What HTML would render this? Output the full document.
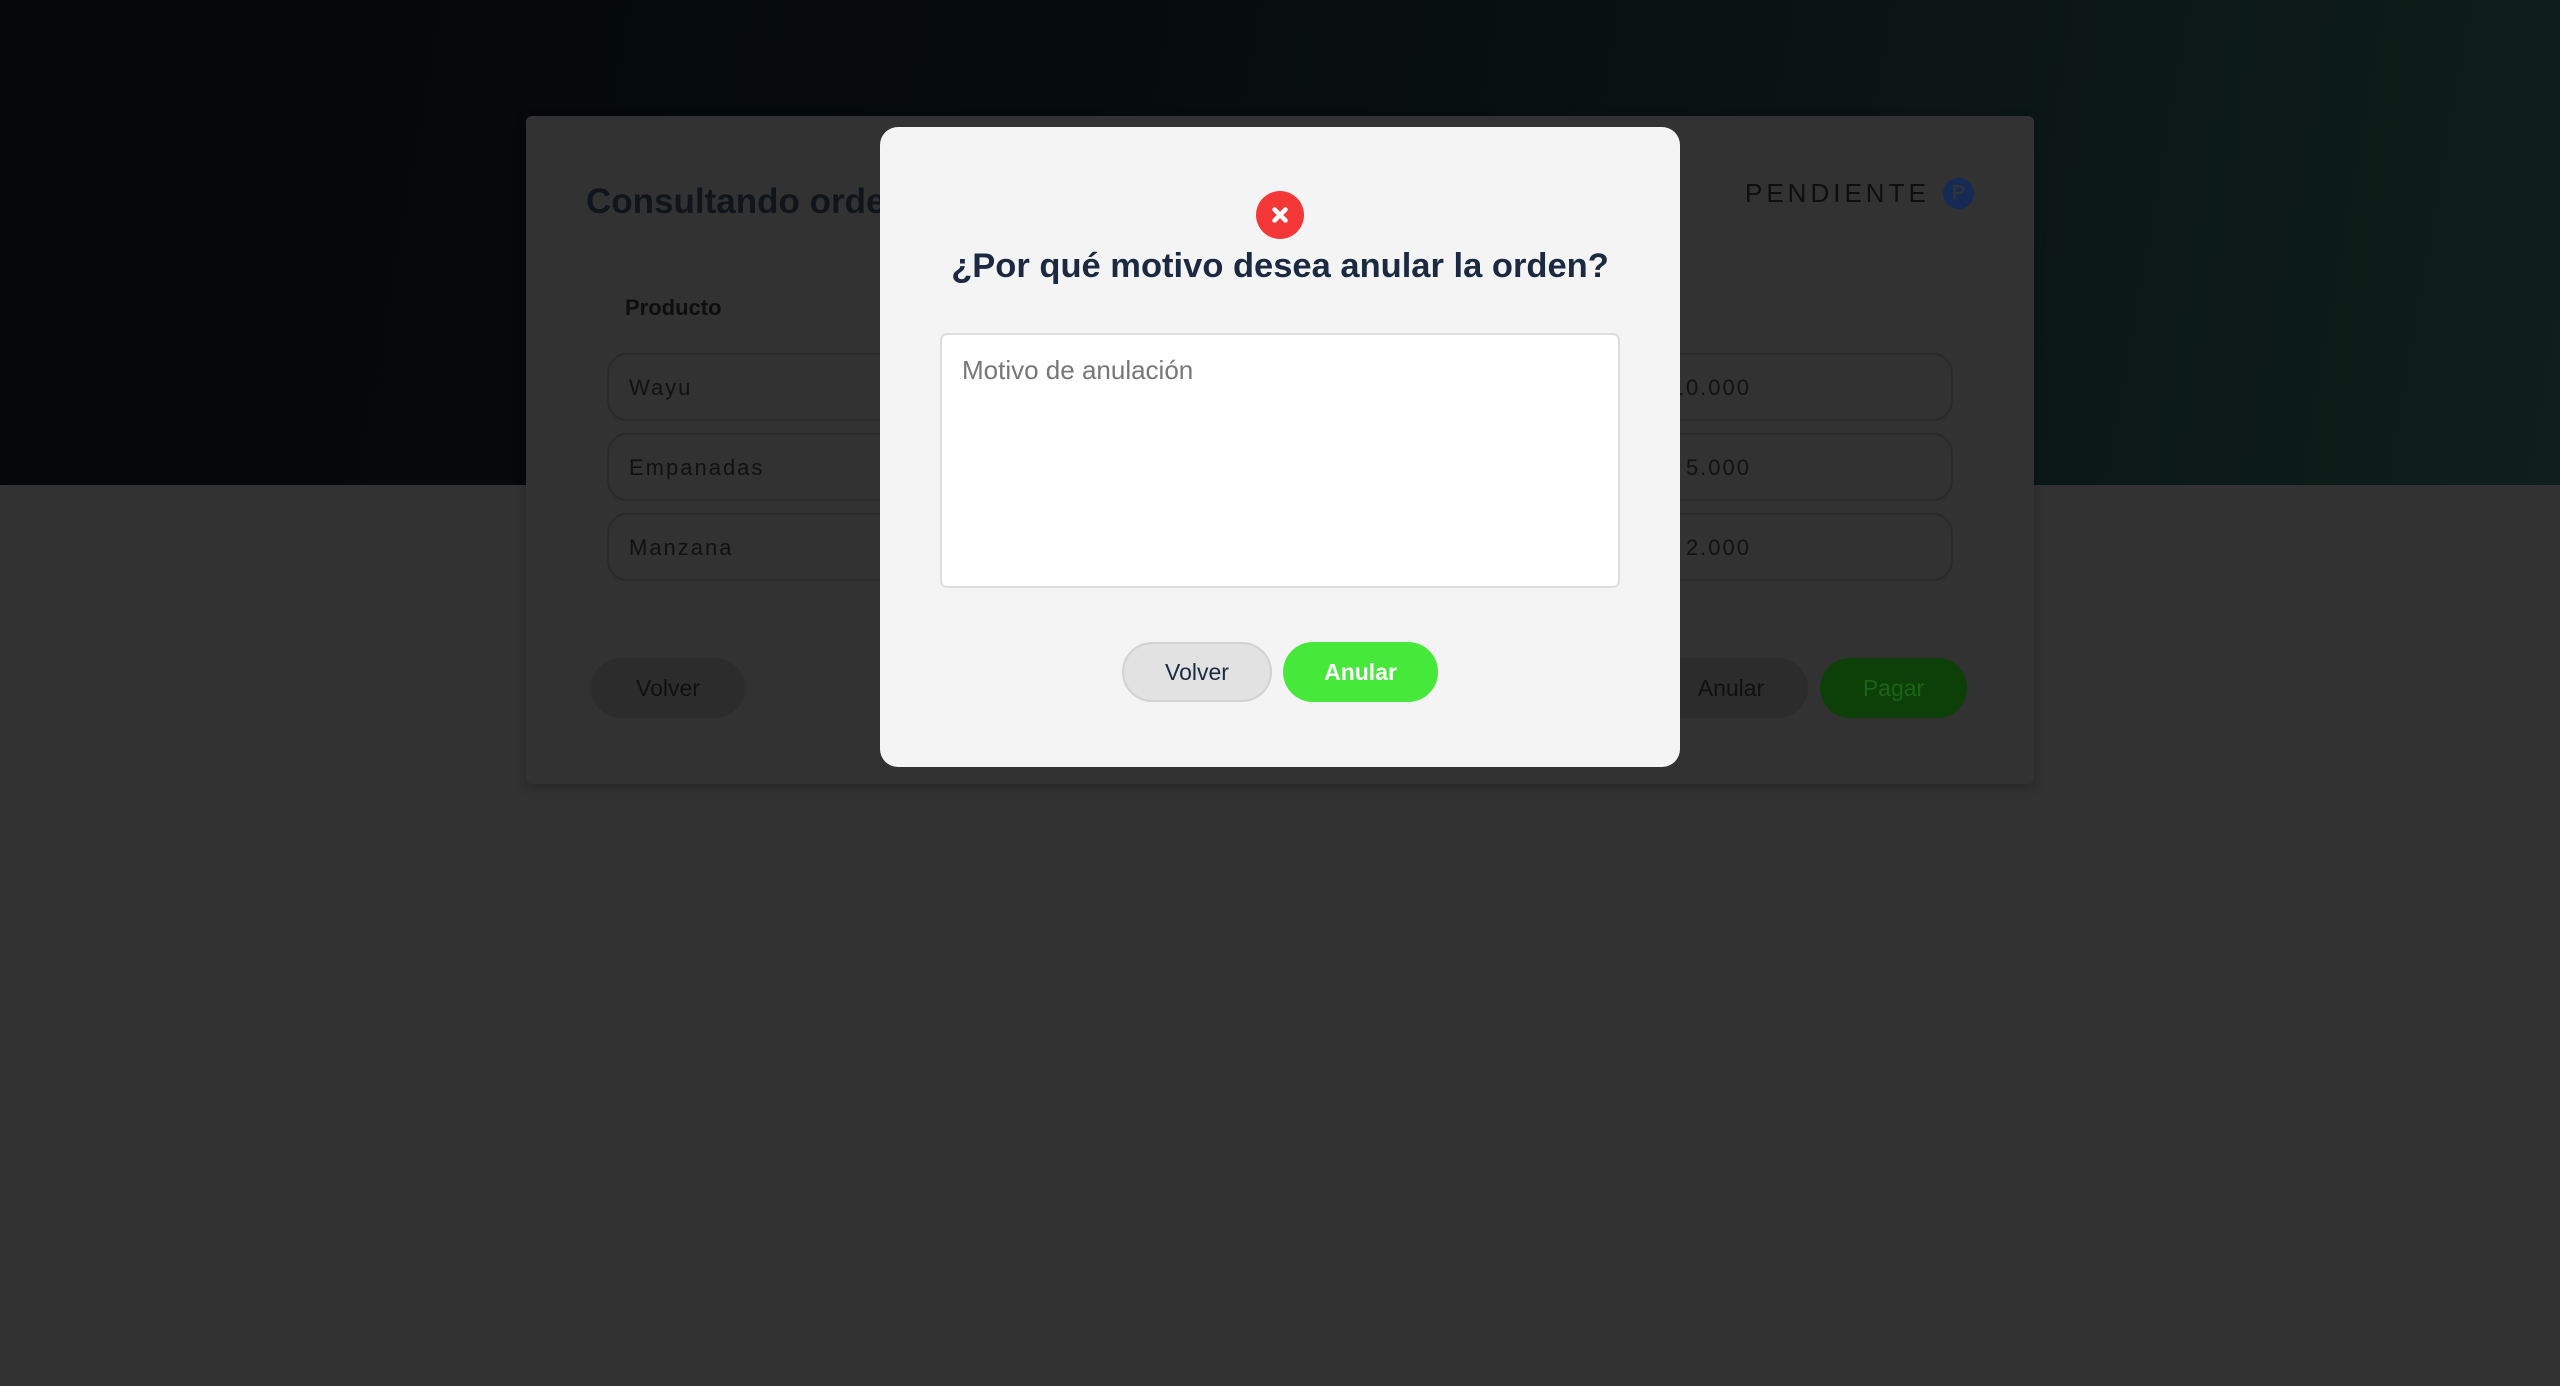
<!DOCTYPE html>
<html><head><meta charset="utf-8"><style>
*{box-sizing:border-box;margin:0;padding:0}
body{width:2560px;height:1386px;overflow:hidden;background:#323232;font-family:"Liberation Sans",Roboto,sans-serif;position:relative}
.hdr{position:absolute;left:0;top:0;width:2560px;height:485px;background:linear-gradient(100deg,#040707 0%,#060b0b 40%,#0a1413 70%,#0f1f1b 100%)}
.card{position:absolute;left:526px;top:116px;width:1508px;height:668px;background:#323232;border-radius:6px;box-shadow:0 4px 12px rgba(0,0,0,.25)}
.a{position:absolute}
.row{position:absolute;left:81px;width:1346px;height:68px;border:2px solid #2a2a2a;border-radius:20px}
.row span{position:absolute;left:20px;top:20px;font-size:22px;letter-spacing:2px;color:#111}
.row b{position:absolute;right:200px;top:20px;font-weight:normal;font-size:22px;letter-spacing:2px;color:#111}
.btn{position:absolute;height:60px;border-radius:30px;display:flex;align-items:center;justify-content:center;font-size:23px}
.modal{position:absolute;left:880px;top:127px;width:800px;height:640px;background:#f4f4f4;border-radius:18px}
</style></head><body>
<div class="hdr"></div>
<div class="card">
 <div class="a" style="left:60px;top:66px;font-size:35px;font-weight:bold;color:#10151c">Consultando orden</div>
 <div class="a" style="left:1219px;top:62px;font-size:26px;letter-spacing:4px;color:#0e0e0e">PENDIENTE</div>
 <div class="a" style="left:1417px;top:62px;width:31px;height:31px;border-radius:50%;background:#172a55;color:#323232;font-weight:bold;font-size:20px;text-align:center;line-height:31px">P</div>
 <div class="a" style="left:99px;top:179px;font-size:22px;font-weight:bold;color:#0e0e0e">Producto</div>
 <div class="row" style="top:237px"><span>Wayu</span><b>$ 10.000</b></div>
 <div class="row" style="top:317px"><span>Empanadas</span><b>$ 5.000</b></div>
 <div class="row" style="top:397px"><span>Manzana</span><b>$ 2.000</b></div>
 <div class="btn" style="left:65px;top:542px;width:154px;background:#2c2c2c;color:#101010">Volver</div>
 <div class="btn" style="left:1128px;top:542px;width:154px;background:#2c2c2c;color:#101010">Anular</div>
 <div class="btn" style="left:1294px;top:542px;width:147px;background:#0c4008;color:#1c6415">Pagar</div>
</div>
<div class="modal">
 <div class="a" style="left:376px;top:64px;width:48px;height:48px;border-radius:50%;background:#f43838">
  <svg width="48" height="48" viewBox="0 0 48 48"><path d="M18.5 18.5L29.5 29.5M29.5 18.5L18.5 29.5" stroke="#fff" stroke-width="4.5" stroke-linecap="round"/></svg>
 </div>
 <div class="a" style="left:0;top:120px;width:800px;text-align:center;font-size:34.5px;font-weight:bold;color:#1b2a40">¿Por qué motivo desea anular la orden?</div>
 <div class="a" style="left:60px;top:206px;width:680px;height:255px;background:#fff;border:2px solid #dedede;border-radius:7px">
  <div class="a" style="left:20px;top:20px;font-size:26px;color:#777">Motivo de anulación</div>
 </div>
 <div class="btn" style="left:242px;top:515px;width:150px;background:#e2e2e2;border:2px solid #d2d2d2;color:#1b2a40">Volver</div>
 <div class="btn" style="left:403px;top:515px;width:155px;background:#46e83a;color:#fff;font-weight:bold">Anular</div>
</div>
</body></html>
